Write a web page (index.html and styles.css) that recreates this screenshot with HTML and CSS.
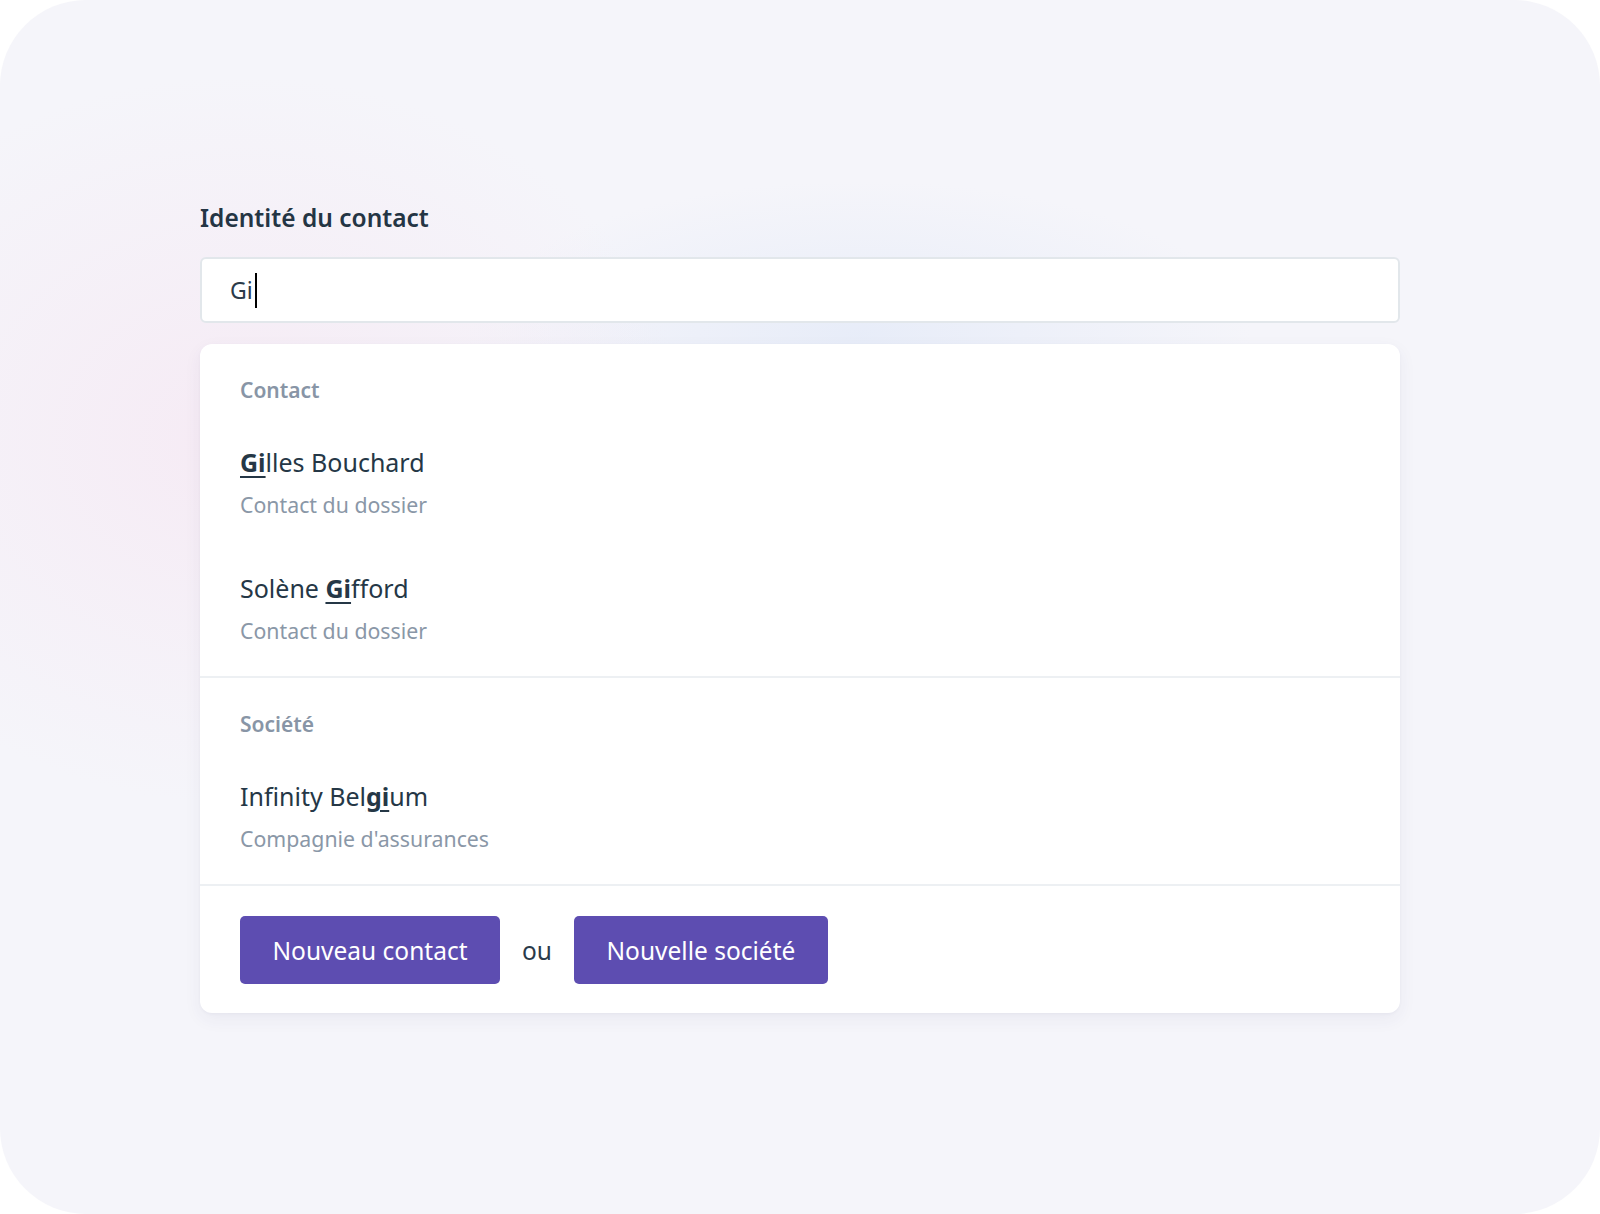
FILE: index.html
```html
<!DOCTYPE html>
<html lang="fr">
<head>
    <meta charset="UTF-8">
    <meta name="viewport" content="width=device-width, initial-scale=1.0">
    <title>Identité du contact</title>
    <link rel="stylesheet" href="styles.css">
</head>
<body>
    <div class="frame">
        <div class="field">
            <label class="field-label">Identité du contact</label>
            <div class="search-input">
                <span class="search-value">Gi</span>
                <span class="caret"></span>
            </div>

            <div class="results">
                <div class="group">
                    <div class="group-title">Contact</div>
                    <div class="result">
                        <div class="result-name"><b>Gi</b>lles Bouchard</div>
                        <div class="result-meta">Contact du dossier</div>
                    </div>
                    <div class="result">
                        <div class="result-name">Solène <b>Gi</b>fford</div>
                        <div class="result-meta">Contact du dossier</div>
                    </div>
                </div>
                <div class="group">
                    <div class="group-title">Société</div>
                    <div class="result">
                        <div class="result-name">Infinity Bel<b>gi</b>um</div>
                        <div class="result-meta">Compagnie d'assurances</div>
                    </div>
                </div>
                <div class="results-footer">
                    <button class="btn">Nouveau contact</button>
                    <span class="or">ou</span>
                    <button class="btn">Nouvelle société</button>
                </div>
            </div>
        </div>
    </div>
</body>
</html>
```

FILE: styles.css
```css
body {
    margin: 0;
    background: #ffffff;
    font-family: "Noto Sans", "Liberation Sans", sans-serif;
    color: #253746;
}

.frame {
    box-sizing: border-box;
    height: 1214px;
    padding-top: 202px;
    border-radius: 86px;
    background:
        radial-gradient(ellipse 640px 520px at 240px 440px, rgba(246, 232, 243, 0.8), rgba(246, 232, 243, 0) 70%),
        radial-gradient(ellipse 560px 220px at 860px 335px, rgba(229, 235, 248, 0.85), rgba(229, 235, 248, 0) 70%),
        #f5f5fa;
}

.field {
    width: 1200px;
    margin: 0 auto;
}

.field-label {
    display: block;
    font-size: 24.5px;
    font-weight: 600;
    line-height: 32px;
    color: #243544;
}

.search-input {
    display: flex;
    align-items: center;
    height: 66px;
    margin-top: 23px;
    padding: 0 28px;
    box-sizing: border-box;
    background: #ffffff;
    border: 2px solid #e2e7eb;
    border-radius: 6px;
}

.search-value {
    font-size: 23px;
    line-height: 62px;
    color: #2b3b4a;
}

.caret {
    width: 2px;
    height: 35px;
    margin-left: 2px;
    background: #000000;
}

.results {
    margin-top: 21px;
    background: #ffffff;
    border-radius: 12px;
    box-shadow: 0 6px 18px rgba(50, 50, 110, 0.06), 0 1px 3px rgba(50, 50, 110, 0.04);
    overflow: hidden;
}

.group {
    padding: 32px 0 4px;
    border-bottom: 2px solid #edf0f3;
}

.group-title {
    padding: 0 40px;
    margin-bottom: 16px;
    font-size: 21px;
    font-weight: 600;
    line-height: 28px;
    color: #8895a6;
}

.result {
    padding: 26px 40px 27px;
}

.result-name {
    font-size: 25px;
    line-height: 32px;
    color: #253746;
}

.result-name b {
    font-weight: 700;
    text-decoration: underline;
    text-decoration-thickness: 2px;
    text-underline-offset: 4px;
}

.result-meta {
    margin-top: 13px;
    font-size: 21.3px;
    line-height: 28px;
    color: #8a97a7;
}

.results-footer {
    display: flex;
    align-items: center;
    gap: 22px;
    padding: 30px 40px 29px;
}

.btn {
    height: 68px;
    padding: 0 32.5px;
    border: none;
    border-radius: 5px;
    background: #5d4db1;
    color: #ffffff;
    font-family: inherit;
    font-size: 24.5px;
    cursor: pointer;
}

.or {
    font-size: 24.5px;
    color: #2a3a4a;
}
```
